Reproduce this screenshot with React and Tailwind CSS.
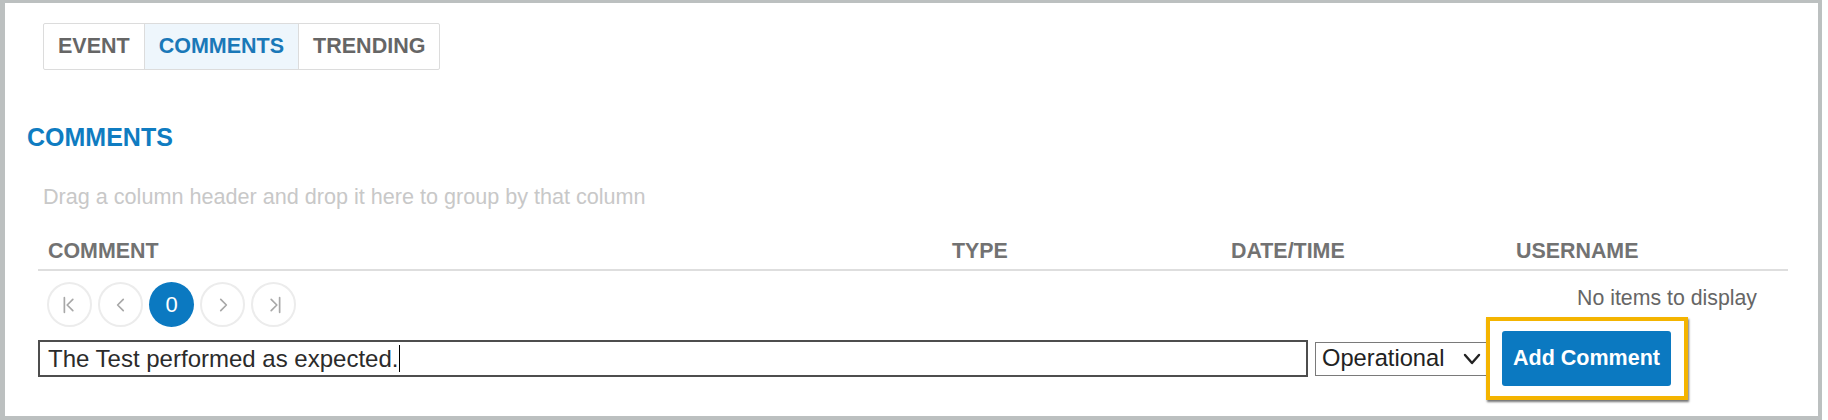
import React from 'react'

const tabs = ['EVENT', 'COMMENTS', 'TRENDING']

const PagerButton = ({ children, active }) => (
  <div
    className={`w-[45px] h-[45px] rounded-full flex items-center justify-center ${
      active ? 'bg-[#0b79c1] text-white' : 'border-2 border-[#ececec] text-[#a8a8a8]'
    }`}
  >
    {children}
  </div>
)

const Icon = ({ d, bar }) => (
  <svg width="18" height="18" viewBox="0 0 16 16" fill="none" stroke="currentColor" strokeWidth="1.5" strokeLinecap="round" strokeLinejoin="round">
    {bar === 'left' && <line x1="3" y1="1.5" x2="3" y2="14.5" />}
    {bar === 'right' && <line x1="13" y1="1.5" x2="13" y2="14.5" />}
    <polyline points={d} />
  </svg>
)

export default function App() {
  return (
    <div className="w-[1822px] h-[420px] bg-white border-t-[3px] border-l-[5px] border-r-[4px] border-b-[4px] border-[#bcc0c0] font-['Liberation_Sans',Arial,sans-serif] overflow-hidden">
      <div className="pl-[33px] pr-[30px]">
        {/* tabs */}
        <div className="mt-[20px] ml-[5px] inline-flex h-[47px] border border-[#dcdcdc] rounded-[2px]">
          {tabs.map((t, i) => (
            <div
              key={t}
              className={`flex items-center px-[14px] text-[21.5px] font-bold ${
                i > 0 ? 'border-l border-[#dcdcdc]' : ''
              } ${t === 'COMMENTS' ? 'bg-[#eef6fc] text-[#1a78b8]' : 'text-[#666666]'}`}
            >
              {t}
            </div>
          ))}
        </div>

        <h2 className="-ml-[11px] mt-[55px] text-[25px] leading-none font-bold text-[#0f7cc1]">COMMENTS</h2>

        <p className="ml-[5px] mt-[36px] text-[21.6px] leading-none text-[#c8c8c8]">
          Drag a column header and drop it here to group by that column
        </p>

        {/* grid header */}
        <div className="mt-[33px] grid grid-cols-[904px_279px_285px_1fr] pl-[10px] pb-[7px] border-b-2 border-[#dedede] text-[21.4px] leading-none font-bold text-[#727272]">
          <div>COMMENT</div>
          <div>TYPE</div>
          <div>DATE/TIME</div>
          <div>USERNAME</div>
        </div>

        {/* pager */}
        <div className="mt-[11px] flex items-start justify-between">
          <div className="ml-[9px] flex gap-[6px]">
            <PagerButton>
              <Icon bar="left" d="10.5,3 5.5,8 10.5,13" />
            </PagerButton>
            <PagerButton>
              <Icon d="10,3 5,8 10,13" />
            </PagerButton>
            <PagerButton active>
              <span className="text-[22px] leading-none">0</span>
            </PagerButton>
            <PagerButton>
              <Icon d="6,3 11,8 6,13" />
            </PagerButton>
            <PagerButton>
              <Icon bar="right" d="5.5,3 10.5,8 5.5,13" />
            </PagerButton>
          </div>
          <div className="mt-[6px] mr-[31px] text-[21.3px] leading-none text-[#666666]">No items to display</div>
        </div>

        {/* input row */}
        <div className="-mt-[10px] flex items-center">
          <div className="w-[1270px] h-[37px] border-2 border-[#4d4d4d] flex items-center pl-[8px] text-[24px] text-[#2b2b2b]">
            <span>The Test performed as expected.</span>
            <span className="ml-[1px] w-px h-[27px] bg-black" />
          </div>
          <div className="ml-[7px] w-[172px] h-[34px] border-[1.5px] border-[#7a7a7a] flex items-center justify-between pl-[6px] pr-[4px] text-[23.7px] text-[#222222]">
            <span>Operational</span>
            <svg width="20" height="14" viewBox="0 0 20 14" fill="none" stroke="#222" strokeWidth="2.4" strokeLinecap="round" strokeLinejoin="round">
              <polyline points="3,3 10,11 17,3" />
            </svg>
          </div>
          <div className="-ml-px h-[83px] border-[4px] border-[#f4b400] bg-white pl-[12px] pr-[13px] flex items-center shadow-[1px_2px_2px_rgba(0,0,0,0.55)]">
            <button className="w-[169px] h-[55px] rounded-[3px] bg-[#0b79c1] text-white text-[21.5px] font-bold">
              Add Comment
            </button>
          </div>
        </div>
      </div>
    </div>
  )
}
